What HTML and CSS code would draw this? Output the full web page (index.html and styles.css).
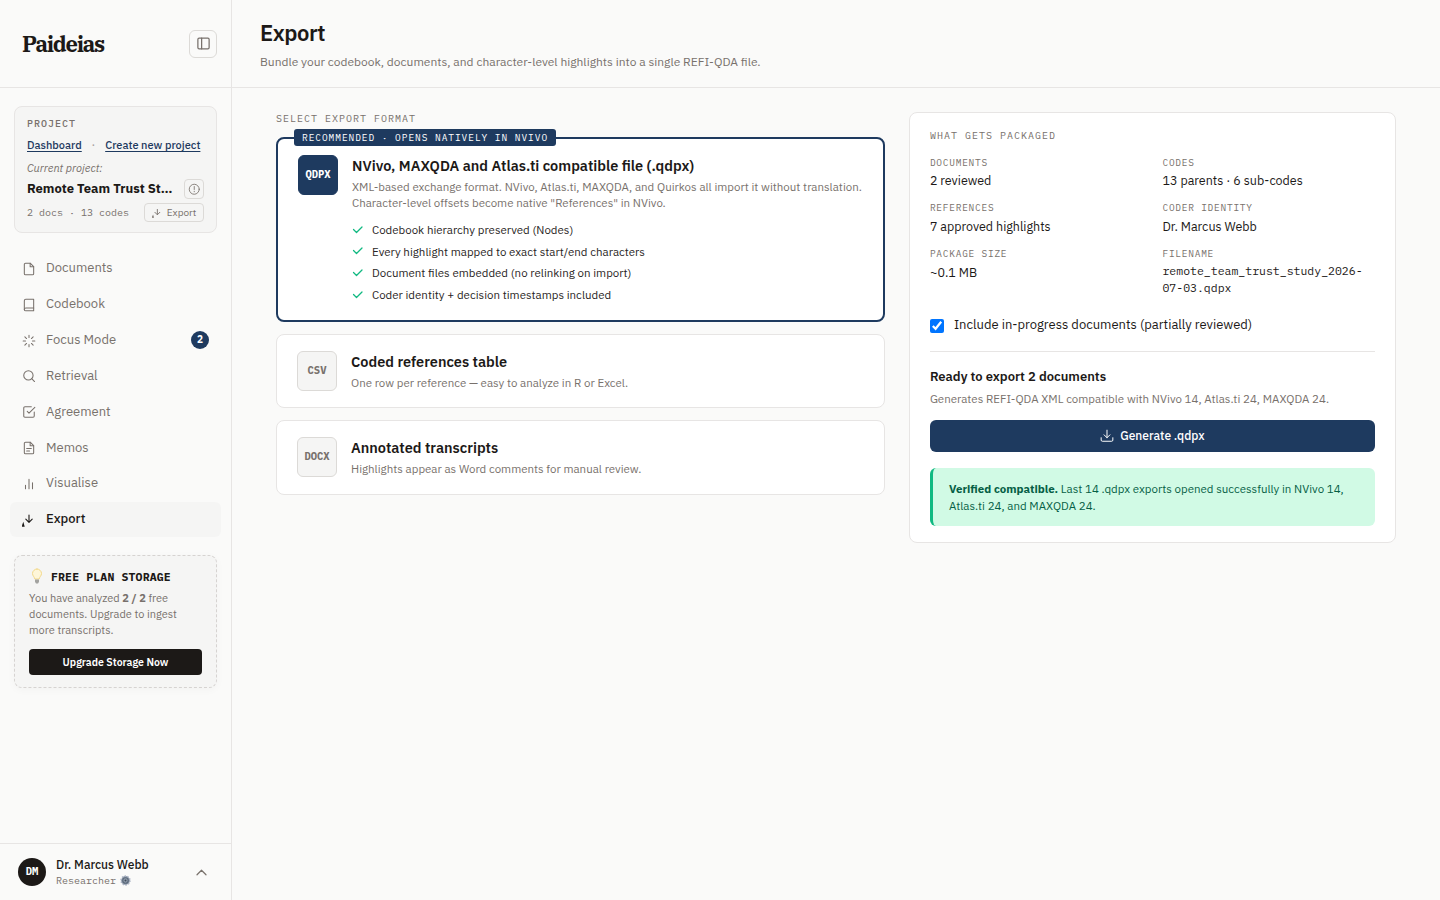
FILE: index.html
```html
<!DOCTYPE html>
<html lang="en">
<head>
  <meta charset="UTF-8">
  <meta name="viewport" content="width=device-width, initial-scale=1.0">
  <title>Paideias - Export</title>
  <link rel="stylesheet" href="styles.css">
</head>
<body>

  <!-- Sidebar -->
  <aside class="sidebar">
    <div class="brand">
      <span class="brand-name">Paideias</span>
      <button class="collapse-btn" aria-label="Collapse sidebar">
        <svg width="15" height="15" viewBox="0 0 24 24"><rect x="3" y="3.5" width="18" height="17" rx="2"/><path d="M9 3.5v17"/></svg>
      </button>
    </div>

    <div class="project">
      <div class="project-label">PROJECT</div>
      <div class="project-links">
        <a href="#">Dashboard</a>
        <span class="dot">·</span>
        <a href="#">Create new project</a>
      </div>
      <div class="project-current">Current project:</div>
      <div class="project-row">
        <span class="project-name">Remote Team Trust St…</span>
        <button class="info-btn" aria-label="Project info">
          <svg width="12" height="12" viewBox="0 0 24 24"><circle cx="12.5" cy="12.5" r="10"/><path d="M12.5 7v6M12.500 16.500v1"/></svg>
        </button>
      </div>
      <div class="project-row meta-row">
        <span class="project-meta">2 docs · 13 codes</span>
        <button class="mini-export">
          <svg width="10" height="10" viewBox="0 0 14 14"><path d="M7.500 2v7M4 6l3.500 3.500L11 6"/><path class="solid" d="M0 13.800v-1.200L1.500 9l1.300 4.800z"/></svg>
          <span>Export</span>
        </button>
      </div>
    </div>

    <nav class="nav">
      <a href="#" class="nav-item">
        <svg viewBox="0 0 24 24"><path d="M14 2H6a2 2 0 0 0-2 2v16a2 2 0 0 0 2 2h12a2 2 0 0 0 2-2V8z"/><path d="M14 2v6h6"/></svg>
        <span>Documents</span>
      </a>
      <a href="#" class="nav-item">
        <svg viewBox="0 0 24 24"><path d="M4 19.500A2.500 2.500 0 0 1 6.500 17H20"/><path d="M6.500 2H20v20H6.500A2.500 2.500 0 0 1 4 19.500v-15A2.500 2.500 0 0 1 6.500 2z"/></svg>
        <span>Codebook</span>
      </a>
      <a href="#" class="nav-item">
        <svg viewBox="0 0 24 24"><path d="M12 2v4M12 18v4M4.900 4.900l2.900 2.900M16.200 16.200l2.900 2.900M2 12h4M18 12h4M4.900 19.100l2.900-2.900M16.200 7.800l2.900-2.900"/></svg>
        <span>Focus Mode</span>
        <span class="count">2</span>
      </a>
      <a href="#" class="nav-item">
        <svg viewBox="0 0 24 24"><circle cx="11" cy="11" r="8"/><path d="M21.500 21.500l-4.800-4.800"/></svg>
        <span>Retrieval</span>
      </a>
      <a href="#" class="nav-item">
        <svg viewBox="0 0 24 24"><path d="M9 11l3 3L22 4"/><path d="M21 12v7a2 2 0 0 1-2 2H5a2 2 0 0 1-2-2V5a2 2 0 0 1 2-2h11"/></svg>
        <span>Agreement</span>
      </a>
      <a href="#" class="nav-item">
        <svg viewBox="0 0 24 24"><path d="M14 2H6a2 2 0 0 0-2 2v16a2 2 0 0 0 2 2h12a2 2 0 0 0 2-2V8z"/><path d="M14 2v6h6M16 13H8M13 17H8"/></svg>
        <span>Memos</span>
      </a>
      <a href="#" class="nav-item">
        <svg viewBox="0 0 24 24"><path d="M18 20V10M12 20V4M6 20v-6"/></svg>
        <span>Visualise</span>
      </a>
      <a href="#" class="nav-item active">
        <svg viewBox="0 0 14 14"><path class="thin" d="M7 2v7M3.800 6.200L7 9.400l3.200-3.200"/><path class="solid" d="M0 13.800v-1.200L1.300 8.800l1.400 5z"/></svg>
        <span>Export</span>
      </a>
    </nav>

    <div class="plan">
      <div class="plan-title">
        <svg class="bulb" width="16" height="16" viewBox="0 0 16 16"><path class="glass" d="M8 1a4.500 4.500 0 0 0-4.500 4.500c0 2.400 2 3.300 2.300 5.500h4.400c.3-2.200 2.300-3.100 2.300-5.500A4.500 4.500 0 0 0 8 1z"/><path class="base" d="M6 11.500h4v2.200L9 15.500H7l-1-1.800z"/></svg>
        <span>FREE PLAN STORAGE</span>
      </div>
      <p class="plan-text">You have analyzed <b>2 / 2</b> free<br>documents. Upgrade to ingest<br>more transcripts.</p>
      <button class="plan-btn">Upgrade Storage Now</button>
    </div>

    <div class="user">
      <div class="avatar">DM</div>
      <div class="user-info">
        <div class="user-name">Dr. Marcus Webb</div>
        <div class="user-role">Researcher <svg class="gear" width="11" height="11" viewBox="0 0 20 20"><circle class="teeth" cx="10" cy="10" r="8"/><circle class="ring" cx="10" cy="10" r="5"/><circle class="hub" cx="10" cy="10" r="1.800"/></svg></div>
      </div>
      <svg class="chevron" width="12" height="12" viewBox="0 0 24 24"><path d="M4 17.500l9-9 9 9"/></svg>
    </div>
  </aside>

  <!-- Main content -->
  <main class="main">
    <header class="page-header">
      <h1>Export</h1>
      <p>Bundle your codebook, documents, and character-level highlights into a single REFI-QDA file.</p>
    </header>

    <div class="content">
      <section class="formats">
        <div class="section-label">SELECT EXPORT FORMAT</div>

        <div class="card selected">
          <span class="ribbon">RECOMMENDED · OPENS NATIVELY IN NVIVO</span>
          <div class="filetype">QDPX</div>
          <div class="card-body">
            <h2>NVivo, MAXQDA and Atlas.ti compatible file (.qdpx)</h2>
            <p>XML-based exchange format. NVivo, Atlas.ti, MAXQDA, and Quirkos all import it without translation.<br>Character-level offsets become native "References" in NVivo.</p>
            <ul>
              <li><svg viewBox="0 0 24 24"><path d="M20 6L9 17l-6-6"/></svg><span>Codebook hierarchy preserved (Nodes)</span></li>
              <li><svg viewBox="0 0 24 24"><path d="M20 6L9 17l-6-6"/></svg><span>Every highlight mapped to exact start/end characters</span></li>
              <li><svg viewBox="0 0 24 24"><path d="M20 6L9 17l-6-6"/></svg><span>Document files embedded (no relinking on import)</span></li>
              <li><svg viewBox="0 0 24 24"><path d="M20 6L9 17l-6-6"/></svg><span>Coder identity + decision timestamps included</span></li>
            </ul>
          </div>
        </div>

        <div class="card">
          <div class="filetype">CSV</div>
          <div class="card-body">
            <h2>Coded references table</h2>
            <p>One row per reference — easy to analyze in R or Excel.</p>
          </div>
        </div>

        <div class="card">
          <div class="filetype">DOCX</div>
          <div class="card-body">
            <h2>Annotated transcripts</h2>
            <p>Highlights appear as Word comments for manual review.</p>
          </div>
        </div>
      </section>

      <section class="package">
        <div class="section-label">WHAT GETS PACKAGED</div>
        <dl class="facts">
          <div><dt>DOCUMENTS</dt><dd>2 reviewed</dd></div>
          <div><dt>CODES</dt><dd>13 parents · 6 sub-codes</dd></div>
          <div><dt>REFERENCES</dt><dd>7 approved highlights</dd></div>
          <div><dt>CODER IDENTITY</dt><dd>Dr. Marcus Webb</dd></div>
          <div><dt>PACKAGE SIZE</dt><dd class="size">~0.1 MB</dd></div>
          <div><dt>FILENAME</dt><dd class="filename">remote_team_trust_study_2026-<br>07-03.qdpx</dd></div>
        </dl>
        <label class="include">
          <input type="checkbox" checked>
          <span>Include in-progress documents (partially reviewed)</span>
        </label>
        <div class="ready">
          <h3>Ready to export 2 documents</h3>
          <p>Generates REFI-QDA XML compatible with NVivo 14, Atlas.ti 24, MAXQDA 24.</p>
          <button class="generate">
            <svg width="14" height="14" viewBox="0 0 24 24"><path d="M22 15v4a2 2 0 0 1-2 2H4a2 2 0 0 1-2-2v-4M7 10l5 5 5-5M12 15V2"/></svg>
            <span>Generate .qdpx</span>
          </button>
        </div>
        <div class="verified"><b>Verified compatible.</b> Last 14 .qdpx exports opened successfully in NVivo 14,<br>Atlas.ti 24, and MAXQDA 24.</div>
      </section>
    </div>
  </main>

</body>
</html>
```
FILE: styles.css
```css
* {
  margin: 0;
  padding: 0;
  box-sizing: border-box;
}

body {
  font-family: "IBM Plex Sans", Roboto, sans-serif;
  display: flex;
  height: 100vh;
  overflow: hidden;
  background: #fafaf9;
  color: #1c1917;
  font-size: 13px;
}

button {
  font-family: inherit;
  cursor: pointer;
}

svg {
  fill: none;
  stroke: currentColor;
  stroke-width: 2;
  stroke-linecap: round;
  stroke-linejoin: round;
  flex-shrink: 0;
}

svg .solid {
  fill: currentColor;
  stroke: none;
}

/* Sidebar */
.sidebar {
  width: 232px;
  flex-shrink: 0;
  border-right: 1px solid #e7e5e4;
  display: flex;
  flex-direction: column;
}

.brand {
  height: 88px;
  border-bottom: 1px solid #e7e5e4;
  display: flex;
  align-items: center;
  justify-content: space-between;
  padding: 0 14px 0 22px;
}

.brand-name {
  font-family: "IBM Plex Serif", "DejaVu Serif", serif;
  font-size: 22px;
  line-height: 28px;
  font-weight: 700;
  letter-spacing: -1.25px;
}

.collapse-btn {
  width: 28px;
  height: 28px;
  border: 1px solid #dcdad7;
  border-radius: 6px;
  background: #fafaf9;
  color: #78716c;
  display: flex;
  align-items: center;
  justify-content: center;
}

.project {
  margin: 18px 14px 0;
  height: 127px;
  padding: 10px 12px;
  border: 1px solid #e7e5e4;
  border-radius: 8px;
  background: #f5f5f4;
}

.project-label {
  font-family: "IBM Plex Mono", "Liberation Mono", monospace;
  font-size: 10px;
  line-height: 14px;
  letter-spacing: 1px;
  color: #78716c;
  font-weight: 500;
}

.project-links {
  display: flex;
  justify-content: space-between;
  margin-top: 6px;
  padding-right: 3.6px;
  font-size: 11px;
  line-height: 16px;
  font-weight: 500;
}

.project-links a {
  color: #1e3a5f;
  text-underline-offset: 2px;
}

.dot {
  color: #a8a29e;
}

.project-current {
  margin-top: 8px;
  font-size: 11px;
  line-height: 15px;
  font-style: italic;
  color: #78716c;
}

.project-row {
  display: flex;
  align-items: center;
  justify-content: space-between;
  margin-top: 3px;
}

.project-name {
  font-size: 13px;
  line-height: 16px;
  font-weight: 700;
  margin-bottom: 1px;
}

.info-btn {
  width: 20px;
  height: 20px;
  border: 1px solid #dcdad7;
  border-radius: 4px;
  background: none;
  color: #78716c;
  display: flex;
  align-items: center;
  justify-content: center;
}

.info-btn svg {
  stroke-width: 1.7;
  overflow: visible;
}

.meta-row {
  margin-top: 4px;
}

.project-meta {
  font-family: "IBM Plex Mono", "Liberation Mono", monospace;
  font-size: 10px;
  color: #78716c;
}

.mini-export {
  width: 60px;
  height: 19px;
  border: 1px solid #dcdad7;
  border-radius: 4px;
  background: none;
  color: #78716c;
  display: flex;
  align-items: center;
  justify-content: center;
  gap: 5px;
  font-size: 10px;
}

.mini-export svg {
  stroke-width: 1.3;
}

.nav {
  margin-top: 18.35px;
  padding: 0 10px;
  display: flex;
  flex-direction: column;
  gap: 1px;
}

.nav-item {
  padding: 8px 12px;
  border-radius: 6px;
  display: flex;
  align-items: center;
  gap: 10px;
  font-size: 13px;
  line-height: 18.85px;
  color: #78716c;
  text-decoration: none;
}

.nav-item svg {
  width: 14px;
  height: 14px;
  margin-top: 0.4px;
  stroke-width: 1.8;
}

.nav-item.active {
  background: #f5f5f4;
  color: #1c1917;
  font-weight: 500;
}

.nav-item .thin {
  stroke-width: 1.1;
}

.count {
  margin-left: auto;
  width: 18px;
  height: 18px;
  border-radius: 50%;
  background: #1e3a5f;
  color: #fff;
  font-size: 10px;
  font-weight: 700;
  line-height: 18px;
  text-align: center;
}

.plan {
  margin: 17.85px 14px 0;
  height: 133px;
  padding: 12px 14px;
  border: 1px dashed #d6d3d1;
  border-radius: 8px;
  background: #f5f5f4;
  box-shadow: 0 2px 8px rgba(28, 25, 23, 0.03);
}

.plan-title {
  display: flex;
  align-items: center;
  gap: 6px;
  height: 18px;
  font-family: "IBM Plex Mono", "Liberation Mono", monospace;
  font-size: 11.5px;
  font-weight: 700;
  letter-spacing: 0.15px;
}

.bulb {
  margin-top: -2px;
}

.bulb .glass {
  fill: #fef6d8;
  stroke: #f3d98b;
  stroke-width: 1;
}

.bulb .base {
  fill: #a3a3a0;
  stroke: none;
}

.plan-text {
  margin-top: 4px;
  font-size: 11px;
  line-height: 16px;
  color: #78716c;
}

.plan-btn {
  margin-top: 11px;
  width: 100%;
  height: 26px;
  border: none;
  border-radius: 4px;
  background: #1c1917;
  color: #fff;
  font-size: 10.5px;
  font-weight: 600;
}

.user {
  margin-top: auto;
  height: 57px;
  border-top: 1px solid #e7e5e4;
  padding: 0 24px 0 18px;
  display: flex;
  align-items: center;
  gap: 10px;
}

.avatar {
  width: 28px;
  height: 28px;
  border-radius: 50%;
  background: #1c1917;
  color: #fff;
  font-family: "IBM Plex Mono", "Liberation Mono", monospace;
  font-size: 10.5px;
  font-weight: 700;
  line-height: 27px;
  text-align: center;
}

.user-name {
  font-size: 12px;
  line-height: 17px;
  font-weight: 500;
}

.user-role {
  display: flex;
  align-items: center;
  gap: 4px;
  font-family: "IBM Plex Mono", "Liberation Mono", monospace;
  font-size: 10px;
  line-height: 15px;
  color: #78716c;
}

.gear .teeth {
  fill: #8d99a8;
  stroke: #aab2c4;
  stroke-width: 3;
  stroke-linecap: butt;
  stroke-dasharray: 2.5 2.5;
}

.gear .ring {
  fill: #8f9bab;
  stroke: #5b697a;
  stroke-width: 2.2;
}

.gear .hub {
  fill: #3f4b5a;
  stroke: none;
}

.chevron {
  margin-left: auto;
  color: #78716c;
  stroke-width: 2.4;
}

/* Page header */
.main {
  flex: 1;
}

.page-header {
  height: 88px;
  border-bottom: 1px solid #e7e5e4;
  padding: 19px 28px;
}

.page-header h1 {
  font-size: 22px;
  line-height: 28px;
  font-weight: 600;
  letter-spacing: -0.44px;
}

.page-header p {
  margin-top: 6px;
  font-size: 12px;
  line-height: 18px;
  color: #78716c;
}

.content {
  padding: 24px 44px;
  display: grid;
  grid-template-columns: 1.25fr 1fr;
  gap: 24px;
  align-items: start;
}

.section-label {
  font-family: "IBM Plex Mono", "Liberation Mono", monospace;
  font-size: 10px;
  line-height: 13px;
  letter-spacing: 1px;
  color: #78716c;
}

/* Format cards */
.formats {
  display: flex;
  flex-direction: column;
  gap: 12px;
}

.card {
  position: relative;
  display: flex;
  gap: 14px;
  height: 74.4px;
  padding: 16px 20px;
  border: 1px solid #e7e5e4;
  border-radius: 8px;
  background: #fff;
}

.card.selected {
  height: 185px;
  border: 2px solid #1e3a5f;
}

.ribbon {
  position: absolute;
  top: -10px;
  left: 16px;
  width: 262px;
  height: 17px;
  padding-left: 8px;
  border-radius: 3px;
  background: #1e3a5f;
  color: #fff;
  font-family: "IBM Plex Mono", "Liberation Mono", monospace;
  font-size: 9.5px;
  line-height: 17px;
  letter-spacing: 0.95px;
  white-space: nowrap;
}

.filetype {
  width: 40px;
  height: 40px;
  flex-shrink: 0;
  border: 1px solid #dcdad7;
  border-radius: 6px;
  background: #f5f5f4;
  color: #78716c;
  font-family: "IBM Plex Mono", "Liberation Mono", monospace;
  font-size: 10.5px;
  font-weight: 700;
  line-height: 36px;
  text-align: center;
}

.selected .filetype {
  background: #1e3a5f;
  border-color: #1e3a5f;
  color: #fff;
}

.card h2 {
  font-size: 14.5px;
  line-height: 22px;
  font-weight: 600;
}

.card p {
  margin-top: 2px;
  font-size: 11.5px;
  line-height: 16px;
  color: #78716c;
  white-space: nowrap;
}

.card ul {
  list-style: none;
  margin-top: 8px;
}

.card li {
  display: flex;
  align-items: center;
  gap: 8px;
  height: 21.6px;
  font-size: 11.5px;
  color: #292524;
}

.card li svg {
  width: 12px;
  height: 12px;
  color: #10b981;
  stroke-width: 2.5;
}

/* Package summary */
.package {
  height: 431px;
  padding: 16px 20px;
  border: 1px solid #e7e5e4;
  border-radius: 8px;
  background: #fff;
}

.facts {
  margin-top: 14px;
  display: grid;
  grid-template-columns: 1fr 1fr;
  grid-template-rows: 45.4px 45.6px 48px;
  column-gap: 20px;
}

.facts dt {
  font-family: "IBM Plex Mono", "Liberation Mono", monospace;
  font-size: 9.5px;
  line-height: 13px;
  letter-spacing: 0.75px;
  color: #78716c;
}

.facts dd {
  margin-top: 1.4px;
  font-size: 12.5px;
  line-height: 20px;
}

.facts .size {
  margin-top: 2.4px;
}

.facts .filename {
  margin-top: 2px;
  font-family: "IBM Plex Mono", "Liberation Mono", monospace;
  font-size: 11.5px;
  line-height: 17px;
}

.include {
  margin-top: 19px;
  display: flex;
  align-items: center;
  gap: 10px;
  height: 20px;
  font-size: 13px;
}

.include input {
  width: 14px;
  height: 14px;
  margin-top: 4px;
}

.include span {
  padding-top: 2px;
}

.ready {
  margin-top: 17px;
  padding-top: 15px;
  border-top: 1px solid #e7e5e4;
}

.ready h3 {
  font-size: 13px;
  line-height: 20px;
  font-weight: 600;
}

.ready p {
  margin-top: 3px;
  font-size: 11.5px;
  line-height: 17px;
  color: #78716c;
}

.generate {
  margin-top: 13px;
  width: 100%;
  height: 32px;
  border: none;
  border-radius: 6px;
  background: #1e3a5f;
  color: #fff;
  display: flex;
  align-items: center;
  justify-content: center;
  gap: 6px;
  font-size: 12px;
  font-weight: 500;
}

.generate svg {
  stroke-width: 1.7;
}

.verified {
  margin-top: 16px;
  height: 58px;
  padding: 12px 16px;
  border-left: 3px solid #10b981;
  border-radius: 6px;
  background: #d1fae5;
  color: #065f46;
  font-size: 11.5px;
  line-height: 17px;
}
```
